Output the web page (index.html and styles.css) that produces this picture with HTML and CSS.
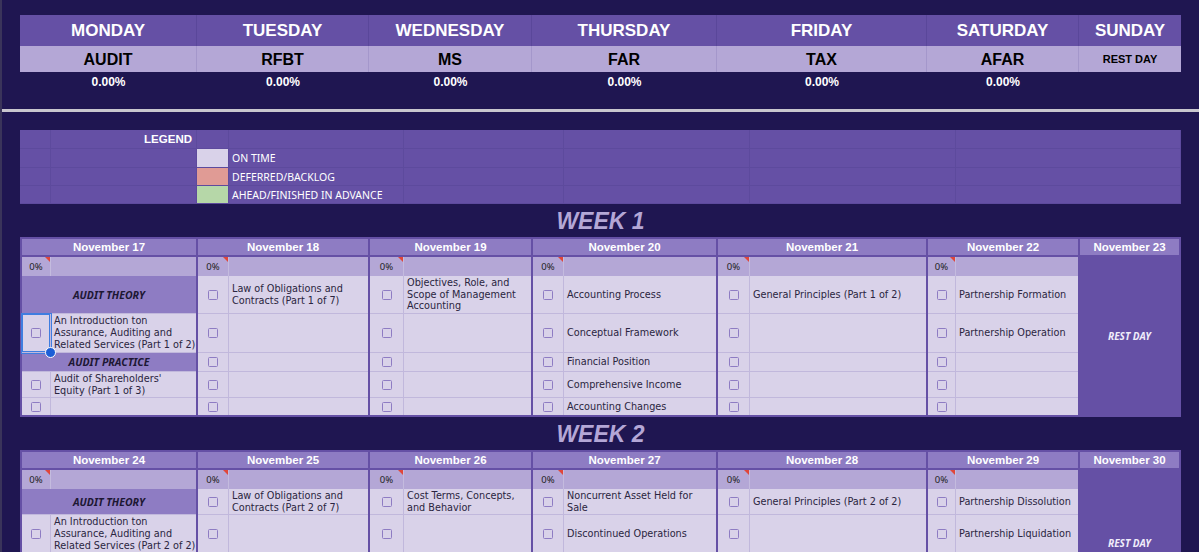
FILE: index.html
```html
<!DOCTYPE html>
<html lang="en">
<head>
<meta charset="utf-8">
<title>Study Planner</title>
<link rel="stylesheet" href="styles.css">
</head>
<body>
<header class="top">
  <div class="summary">
    <div class="sum-day">MONDAY</div>
    <div class="sum-day">TUESDAY</div>
    <div class="sum-day">WEDNESDAY</div>
    <div class="sum-day">THURSDAY</div>
    <div class="sum-day">FRIDAY</div>
    <div class="sum-day">SATURDAY</div>
    <div class="sum-day last">SUNDAY</div>
    <div class="sum-subj">AUDIT</div>
    <div class="sum-subj">RFBT</div>
    <div class="sum-subj">MS</div>
    <div class="sum-subj">FAR</div>
    <div class="sum-subj">TAX</div>
    <div class="sum-subj">AFAR</div>
    <div class="sum-subj last small">REST DAY</div>
    <div class="sum-pct">0.00%</div>
    <div class="sum-pct">0.00%</div>
    <div class="sum-pct">0.00%</div>
    <div class="sum-pct">0.00%</div>
    <div class="sum-pct">0.00%</div>
    <div class="sum-pct">0.00%</div>
    <div class="sum-pct"></div>
  </div>
</header>
<div class="freeze"></div>
<main class="main">
  <div class="legend">
    <div></div><div class="legend-title">LEGEND</div><div></div><div></div><div></div><div></div><div></div><div></div>
    <div></div><div></div><div class="swatch on"></div><div class="legend-label">ON TIME</div><div></div><div></div><div></div><div></div>
    <div></div><div></div><div class="swatch late"></div><div class="legend-label">DEFERRED/BACKLOG</div><div></div><div></div><div></div><div></div>
    <div></div><div></div><div class="swatch ahead"></div><div class="legend-label">AHEAD/FINISHED IN ADVANCE</div><div></div><div></div><div></div><div></div>
  </div>

  <h2 class="week-title">WEEK 1</h2>
  <section class="week w1">
    <div class="day mon">
      <div class="date">November 17</div>
      <div class="pct">0%</div><div class="pct-fill"></div>
      <div class="topic">AUDIT THEORY</div>
      <div class="chk selected"><span class="cb"></span><span class="handle"></span></div><div class="task">An Introduction ton<br>Assurance, Auditing and<br>Related Services (Part 1 of 2)</div>
      <div class="topic">AUDIT PRACTICE</div>
      <div class="chk"><span class="cb"></span></div><div class="task">Audit of Shareholders'<br>Equity (Part 1 of 3)</div>
      <div class="chk"><span class="cb"></span></div><div class="task"></div>
    </div>
    <div class="day tue">
      <div class="date">November 18</div>
      <div class="pct">0%</div><div class="pct-fill"></div>
      <div class="chk"><span class="cb"></span></div><div class="task">Law of Obligations and<br>Contracts (Part 1 of 7)</div>
      <div class="chk"><span class="cb"></span></div><div class="task"></div>
      <div class="chk"><span class="cb"></span></div><div class="task"></div>
      <div class="chk"><span class="cb"></span></div><div class="task"></div>
      <div class="chk"><span class="cb"></span></div><div class="task"></div>
    </div>
    <div class="day wed">
      <div class="date">November 19</div>
      <div class="pct">0%</div><div class="pct-fill"></div>
      <div class="chk"><span class="cb"></span></div><div class="task">Objectives, Role, and<br>Scope of Management<br>Accounting</div>
      <div class="chk"><span class="cb"></span></div><div class="task"></div>
      <div class="chk"><span class="cb"></span></div><div class="task"></div>
      <div class="chk"><span class="cb"></span></div><div class="task"></div>
      <div class="chk"><span class="cb"></span></div><div class="task"></div>
    </div>
    <div class="day thu">
      <div class="date">November 20</div>
      <div class="pct">0%</div><div class="pct-fill"></div>
      <div class="chk"><span class="cb"></span></div><div class="task">Accounting Process</div>
      <div class="chk"><span class="cb"></span></div><div class="task">Conceptual Framework</div>
      <div class="chk"><span class="cb"></span></div><div class="task">Financial Position</div>
      <div class="chk"><span class="cb"></span></div><div class="task">Comprehensive Income</div>
      <div class="chk"><span class="cb"></span></div><div class="task">Accounting Changes</div>
    </div>
    <div class="day fri">
      <div class="date">November 21</div>
      <div class="pct">0%</div><div class="pct-fill"></div>
      <div class="chk"><span class="cb"></span></div><div class="task">General Principles (Part 1 of 2)</div>
      <div class="chk"><span class="cb"></span></div><div class="task"></div>
      <div class="chk"><span class="cb"></span></div><div class="task"></div>
      <div class="chk"><span class="cb"></span></div><div class="task"></div>
      <div class="chk"><span class="cb"></span></div><div class="task"></div>
    </div>
    <div class="day sat">
      <div class="date">November 22</div>
      <div class="pct">0%</div><div class="pct-fill"></div>
      <div class="chk"><span class="cb"></span></div><div class="task">Partnership Formation</div>
      <div class="chk"><span class="cb"></span></div><div class="task">Partnership Operation</div>
      <div class="chk"><span class="cb"></span></div><div class="task"></div>
      <div class="chk"><span class="cb"></span></div><div class="task"></div>
      <div class="chk"><span class="cb"></span></div><div class="task"></div>
    </div>
    <div class="day sun">
      <div class="date">November 23</div>
      <div class="rest">REST DAY</div>
    </div>
  </section>

  <h2 class="week-title">WEEK 2</h2>
  <section class="week w2">
    <div class="day mon">
      <div class="date">November 24</div>
      <div class="pct">0%</div><div class="pct-fill"></div>
      <div class="topic">AUDIT THEORY</div>
      <div class="chk"><span class="cb"></span></div><div class="task">An Introduction ton<br>Assurance, Auditing and<br>Related Services (Part 2 of 2)</div>
      <div class="chk"><span class="cb"></span></div><div class="task"></div>
      <div class="chk"><span class="cb"></span></div><div class="task"></div>
      <div class="chk"><span class="cb"></span></div><div class="task"></div>
    </div>
    <div class="day tue">
      <div class="date">November 25</div>
      <div class="pct">0%</div><div class="pct-fill"></div>
      <div class="chk"><span class="cb"></span></div><div class="task">Law of Obligations and<br>Contracts (Part 2 of 7)</div>
      <div class="chk"><span class="cb"></span></div><div class="task"></div>
      <div class="chk"><span class="cb"></span></div><div class="task"></div>
      <div class="chk"><span class="cb"></span></div><div class="task"></div>
      <div class="chk"><span class="cb"></span></div><div class="task"></div>
    </div>
    <div class="day wed">
      <div class="date">November 26</div>
      <div class="pct">0%</div><div class="pct-fill"></div>
      <div class="chk"><span class="cb"></span></div><div class="task">Cost Terms, Concepts,<br>and Behavior</div>
      <div class="chk"><span class="cb"></span></div><div class="task"></div>
      <div class="chk"><span class="cb"></span></div><div class="task"></div>
      <div class="chk"><span class="cb"></span></div><div class="task"></div>
      <div class="chk"><span class="cb"></span></div><div class="task"></div>
    </div>
    <div class="day thu">
      <div class="date">November 27</div>
      <div class="pct">0%</div><div class="pct-fill"></div>
      <div class="chk"><span class="cb"></span></div><div class="task">Noncurrent Asset Held for<br>Sale</div>
      <div class="chk"><span class="cb"></span></div><div class="task">Discontinued Operations</div>
      <div class="chk"><span class="cb"></span></div><div class="task"></div>
      <div class="chk"><span class="cb"></span></div><div class="task"></div>
      <div class="chk"><span class="cb"></span></div><div class="task"></div>
    </div>
    <div class="day fri">
      <div class="date">November 28</div>
      <div class="pct">0%</div><div class="pct-fill"></div>
      <div class="chk"><span class="cb"></span></div><div class="task">General Principles (Part 2 of 2)</div>
      <div class="chk"><span class="cb"></span></div><div class="task"></div>
      <div class="chk"><span class="cb"></span></div><div class="task"></div>
      <div class="chk"><span class="cb"></span></div><div class="task"></div>
      <div class="chk"><span class="cb"></span></div><div class="task"></div>
    </div>
    <div class="day sat">
      <div class="date">November 29</div>
      <div class="pct">0%</div><div class="pct-fill"></div>
      <div class="chk"><span class="cb"></span></div><div class="task">Partnership Dissolution</div>
      <div class="chk"><span class="cb"></span></div><div class="task">Partnership Liquidation</div>
      <div class="chk"><span class="cb"></span></div><div class="task"></div>
      <div class="chk"><span class="cb"></span></div><div class="task"></div>
      <div class="chk"><span class="cb"></span></div><div class="task"></div>
    </div>
    <div class="day sun">
      <div class="date">November 30</div>
      <div class="rest">REST DAY</div>
    </div>
  </section>
</main>
</body>
</html>
```

FILE: styles.css
```css
* {
  box-sizing: border-box;
}

html {
  overflow: hidden;
}

body {
  margin: 0;
  background: #1f1651;
  border-left: 2px solid #3a345a;
  font-family: "Noto Sans", "DejaVu Sans", sans-serif;
}

/* ---------- top summary ---------- */
.top {
  padding: 15px 0 17px 18px;
}

.summary {
  display: grid;
  grid-template-columns: 177px 172px 163px 185px 210px 152px 102px;
  grid-template-rows: 31px 26px 20px;
  width: 1161px;
}

.sum-day {
  background: #6550a5;
  color: #fff;
  font: bold 17px/31px "Liberation Sans", Arial, sans-serif;
  text-align: center;
  border-right: 1px solid #5a479a;
}

.sum-subj {
  background: #b4a7d6;
  color: #000;
  font: bold 16px/28px "Liberation Sans", Arial, sans-serif;
  text-align: center;
  border-right: 1px solid #a497cb;
}

.sum-subj.small {
  font-size: 11px;
  line-height: 27px;
}

.sum-day.last,
.sum-subj.last {
  border-right: none;
}

.sum-pct {
  color: #fff;
  font: bold 12px/20px "Liberation Sans", Arial, sans-serif;
  text-align: center;
}

.freeze {
  height: 3px;
  background: #c8c6ce;
}

.main {
  padding: 18px 0 0 18px;
}

/* ---------- legend ---------- */
.legend {
  display: grid;
  grid-template-columns: 31px 146px 32px 175px 160px 186px 206px 225px;
  grid-template-rows: 19px 19px 18px 18px;
  width: 1161px;
  background: #6550a5;
}

.legend > div {
  border-right: 1px solid #5d4a9d;
  border-bottom: 1px solid #5d4a9d;
}

.legend-title {
  color: #fff;
  font: bold 11.5px/19px "Liberation Sans", Arial, sans-serif;
  text-align: right;
  padding-right: 4px;
}

.legend > .legend-label {
  color: #fff;
  font-size: 10.5px;
  line-height: 18px;
  padding-left: 3px;
  white-space: nowrap;
}

.swatch.on { background: #d9d2e9; }
.swatch.late { background: #e09b95; }
.swatch.ahead { background: #b6d7a8; }

/* ---------- week tables ---------- */
.week-title {
  margin: 0;
  width: 1161px;
  height: 33px;
  padding-top: 2px;
  text-align: center;
  color: #b4a7d6;
  font: italic bold 23px/31px "Liberation Sans", Arial, sans-serif;
}

.week {
  display: flex;
  gap: 2px;
  padding: 2px;
  width: 1161px;
  background: #6550a5;
  --rows: 18px 19px 38px 39px 19px 26px 17px;
}

.week.w2 {
  --rows: 18px 19px 26px 39px 19px 26px 17px;
}

.day {
  display: grid;
  grid-template-columns: var(--cw) 1fr;
  grid-template-rows: var(--rows);
  background: #d9d2e9;
  flex: none;
}

.mon { width: 174px; --cw: 29px; }
.tue { width: 170px; --cw: 31px; }
.wed { width: 161px; --cw: 34px; }
.thu { width: 183px; --cw: 31px; }
.fri { width: 208px; --cw: 32px; }
.sat { width: 150px; --cw: 28px; }
.sun {
  width: 99px;
  grid-template-columns: 1fr;
  background: #6550a5;
}

.date {
  grid-column: 1 / -1;
  background: #8e7cc3;
  color: #fff;
  font: bold 11.5px/16px "Liberation Sans", Arial, sans-serif;
  text-align: center;
  border-bottom: 2px solid #6550a5;
}

.pct {
  position: relative;
  display: flex;
  align-items: center;
  justify-content: center;
  background: #b4a7d6;
  color: #222;
  font-size: 9.5px;
  border-right: 1px solid #c4bbde;
}

.pct::after {
  content: "";
  position: absolute;
  top: 0;
  right: 0;
  border-top: 5px solid #e0463a;
  border-left: 5px solid transparent;
}

.pct-fill {
  background: #b4a7d6;
}

.topic {
  grid-column: 1 / -1;
  display: flex;
  align-items: center;
  justify-content: center;
  background: #8e7cc3;
  color: #1d1733;
  font-size: 10.5px;
  font-weight: bold;
  font-style: italic;
  border-bottom: 1px solid #c1b8dc;
}

.chk {
  position: relative;
  display: flex;
  align-items: center;
  justify-content: center;
  border-right: 1px solid #c1b8dc;
  border-bottom: 1px solid #c1b8dc;
}

.task {
  display: flex;
  align-items: center;
  min-width: 0;
  padding: 0 0 0 3px;
  color: #2a2540;
  font-family: "DejaVu Sans", "Noto Sans", sans-serif;
  font-size: 9.7px;
  line-height: 11.7px;
  white-space: nowrap;
  border-bottom: 1px solid #c1b8dc;
}

.day:not(.sun) > :nth-last-child(-n+2) {
  border-bottom: none;
}

.cb {
  width: 10px;
  height: 10px;
  border: 1.5px solid #8e7cc3;
  border-radius: 1.5px;
}

.chk.selected {
  z-index: 1;
  box-shadow: 0 0 0 1px #3f7de0, inset 0 0 0 1px #3f7de0;
}

.handle {
  position: absolute;
  right: -6px;
  bottom: -6px;
  width: 11px;
  height: 11px;
  border-radius: 50%;
  background: #1c5ed6;
  border: 1px solid #fff;
  z-index: 2;
}

.rest {
  grid-row: 2 / -1;
  display: flex;
  align-items: center;
  justify-content: center;
  color: #f0ecfa;
  font-size: 10px;
  font-weight: bold;
  font-style: italic;
}
```
